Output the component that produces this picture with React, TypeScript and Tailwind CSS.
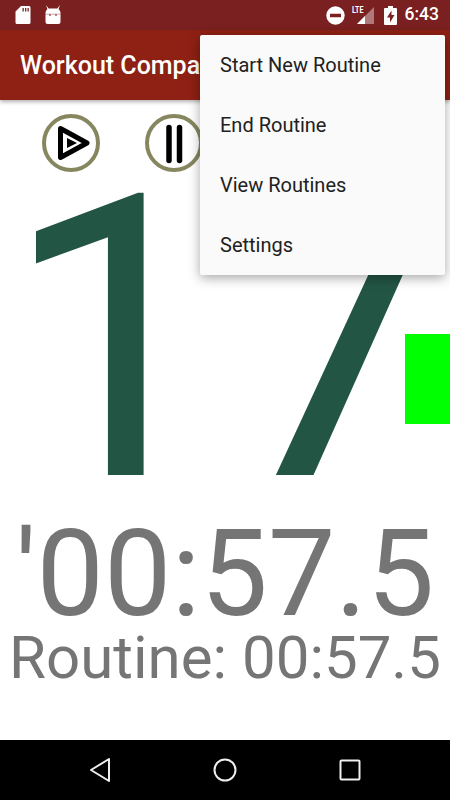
const menuItems = ["Start New Routine", "End Routine", "View Routines", "Settings"];

function SdCardIcon() {
  return (
    <svg width="16" height="20" viewBox="0 0 16 20">
      <path fillRule="evenodd" fill="#fff" d="M6 1h8a1.500 1.500 0 0 1 1.500 1.500v15a1.500 1.500 0 0 1-1.500 1.500H2a1.500 1.500 0 0 1-1.500-1.500V6.500zM7.500 3v3.500h1.300V3zM10 3v3.500h1.300V3zM12.500 3v3.500h1.300V3z" />
    </svg>
  );
}

function AndroidIcon() {
  return (
    <svg width="16" height="20" viewBox="0 0 16 20">
      <path fill="#fff" d="M1 0l3.200 4.200-1.400 1zM15 0l-3.200 4.200 1.400 1z" />
      <path fill="#fff" d="M5 3.500h6A4.500 4.500 0 0 1 15.500 8v9a2 2 0 0 1-2 2h-11a2 2 0 0 1-2-2V8A4.500 4.500 0 0 1 5 3.500z" />
      <rect x="0.500" y="8.500" width="15" height="1.500" fill="#7b2020" opacity="0.25" />
      <circle cx="5" cy="10" r="1" fill="#a85a5a" />
      <circle cx="11" cy="10" r="1" fill="#a85a5a" />
    </svg>
  );
}

function DndIcon() {
  return (
    <svg width="19" height="19" viewBox="0 0 19 19">
      <circle cx="9.500" cy="9.500" r="9.200" fill="#fff" />
      <rect x="4" y="7.750" width="11" height="3.500" fill="#7b2020" />
    </svg>
  );
}

function SignalIcon() {
  return (
    <svg width="23" height="20" viewBox="0 0 23 20">
      <path fill="#fff" opacity="0.4" d="M22 2v17H5z" />
      <path fill="#fff" d="M13 11v8H5z" />
      <text x="0" y="8" fontSize="9.500" fontWeight="700" fontFamily="Roboto, sans-serif" fill="#fff" textLength="11.500" lengthAdjust="spacingAndGlyphs">LTE</text>
    </svg>
  );
}

function BatteryIcon() {
  return (
    <svg width="13" height="19" viewBox="0 0 13 19">
      <path fillRule="evenodd" fill="#fff" d="M4 0h5v2h3a1 1 0 0 1 1 1v15a1 1 0 0 1-1 1H1a1 1 0 0 1-1-1V3a1 1 0 0 1 1-1h3zM7.500 4.500L3 11.500H6v5l4.500-7.500h-3z" />
    </svg>
  );
}

function PlayIcon() {
  return (
    <svg width="58" height="58" viewBox="0 0 58 58">
      <circle cx="29" cy="29" r="27" fill="#fff" stroke="#86875f" strokeWidth="4" />
      <path d="M18.500 14.500L45 29 18.500 43.500z" fill="none" stroke="#000" strokeWidth="5" strokeLinejoin="round" />
      <path d="M25 24l10 5-10 5z" fill="#000" />
    </svg>
  );
}

function PauseIcon() {
  return (
    <svg width="58" height="58" viewBox="0 0 58 58">
      <circle cx="29" cy="29" r="27" fill="#fff" stroke="#86875f" strokeWidth="4" />
      <path d="M24 13.500v33M34.500 13.500v33" fill="none" stroke="#000" strokeWidth="5.500" strokeLinecap="round" />
    </svg>
  );
}

function NavBar() {
  return (
    <div className="h-[60px] bg-black flex items-center justify-center gap-[75px] shrink-0">
      <svg width="50" height="28" viewBox="0 0 50 28">
        <path d="M34 3L16 14l18 11z" fill="none" stroke="#eee" strokeWidth="2" strokeLinejoin="round" />
      </svg>
      <svg width="50" height="28" viewBox="0 0 50 28">
        <circle cx="25" cy="14" r="10.500" fill="none" stroke="#eee" strokeWidth="2" />
      </svg>
      <svg width="50" height="28" viewBox="0 0 50 28">
        <rect x="15.500" y="4.500" width="19" height="19" rx="1" fill="none" stroke="#eee" strokeWidth="2" />
      </svg>
    </div>
  );
}

export default function App() {
  return (
    <div className="w-[450px] h-[800px] bg-white relative overflow-hidden flex flex-col font-['Roboto',sans-serif]">
      {/* Status bar */}
      <div className="h-[30px] bg-[#7b2020] flex items-center justify-between pl-[15px] pr-[11px] shrink-0">
        <div className="flex items-center gap-[14px]">
          <SdCardIcon />
          <AndroidIcon />
        </div>
        <div className="flex items-center">
          <DndIcon />
          <div className="ml-[7px]"><SignalIcon /></div>
          <div className="ml-[9px]"><BatteryIcon /></div>
          <span className="ml-[8px] text-white text-[17.5px] font-medium leading-none">6:43</span>
        </div>
      </div>

      {/* App bar */}
      <div className="h-[70px] bg-[#8e2014] flex items-center pl-[20px] pt-[1px] shadow-[0_2px_4px_rgba(0,0,0,0.3)] shrink-0 z-10">
        <span className="whitespace-nowrap text-white text-[25px] leading-[30px] font-medium">Workout Compa</span>
      </div>

      {/* Controls */}
      <div className="flex gap-[45px] pl-[42px] pt-[14px] shrink-0">
        <PlayIcon />
        <PauseIcon />
      </div>

      {/* Big counter */}
      <div className="h-[340px] text-[395px] leading-[336px] text-[#235545] text-center whitespace-nowrap shrink-0">
        17
      </div>

      <div className="flex-1 flex flex-col items-center">
        <div className="text-[120px] leading-[110px] mt-[7px] text-[#757575] whitespace-nowrap">'00:57.5</div>
        <div className="text-[60px] leading-[70px] -mt-[6px] text-[#757575] whitespace-nowrap">Routine: 00:57.5</div>
      </div>

      <NavBar />

      {/* Progress block */}
      <div className="absolute left-[405px] top-[334px] w-[45px] h-[90px] bg-[#00ff00]" />

      {/* Overflow menu */}
      <div className="absolute left-[200px] top-[35px] w-[245px] h-[240px] bg-[#fafafa] rounded-[2px] shadow-[0_3px_12px_rgba(0,0,0,0.35)] z-20 flex flex-col">
        {menuItems.map((item) => (
          <div key={item} className="h-[60px] flex items-center pl-[20px] text-[20px] text-[#212121]">
            {item}
          </div>
        ))}
      </div>
    </div>
  );
}
